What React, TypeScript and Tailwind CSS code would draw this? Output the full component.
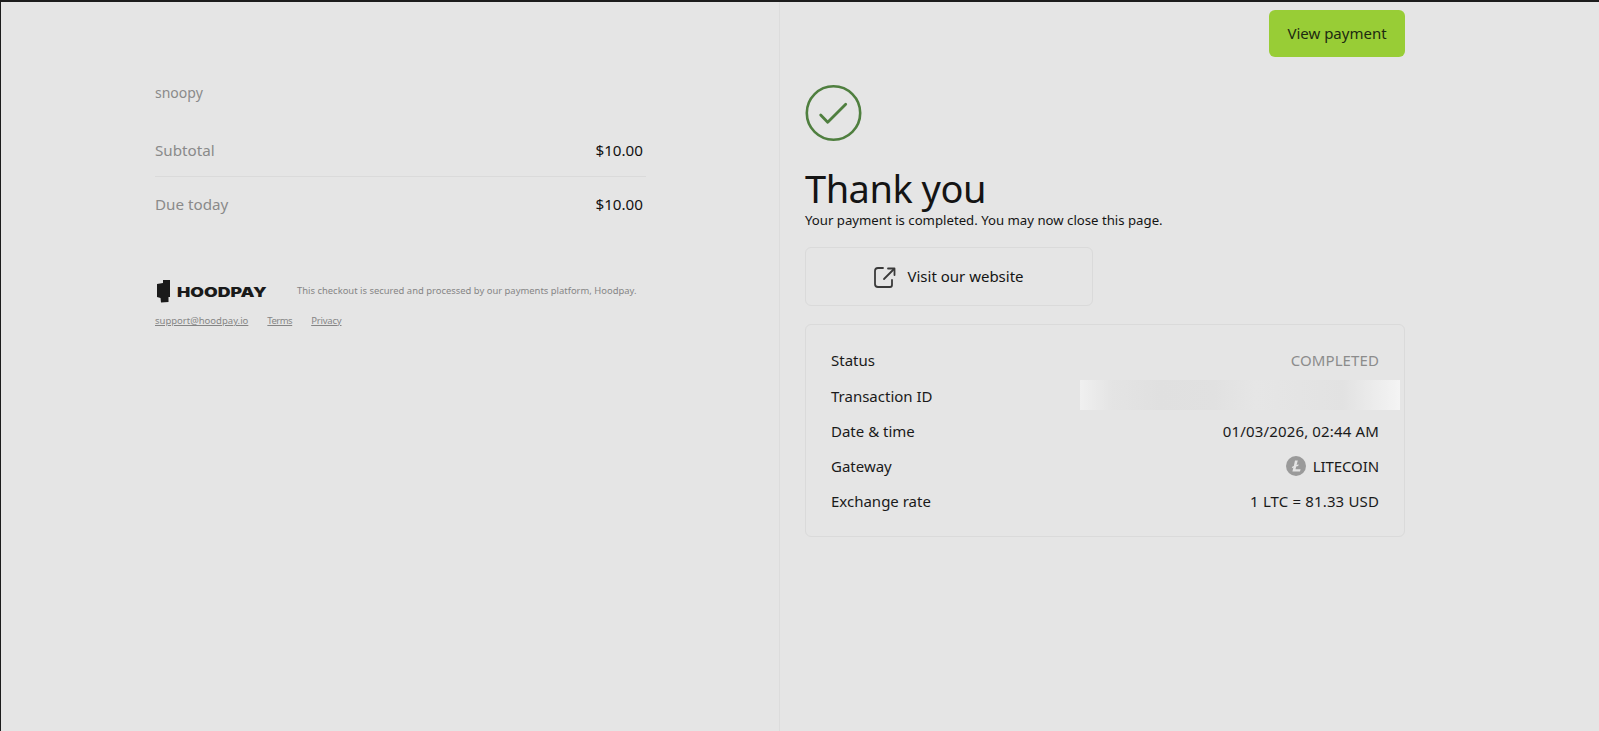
const FONT = "font-['Noto_Sans','Open_Sans',sans-serif]";

function Row({ label, children }: { label: string; children: React.ReactNode }) {
  return (
    <div className="flex h-[35.2px] items-center justify-between text-[15px] text-[#1a1a1a]">
      <span>{label}</span>
      {children}
    </div>
  );
}

function LogoMark() {
  return (
    <svg width="16" height="24" viewBox="0 0 16 24" className="shrink-0">
      <path d="M2 5 L8 4 L8 1 L15 1 L15 18 L13.5 18 L13.5 23 L6 23.5 L5.5 19 L2 18 Z" fill="#1a1a1a" />
    </svg>
  );
}

function LitecoinIcon() {
  return (
    <svg width="20" height="20" viewBox="0 0 20 20" className="shrink-0">
      <circle cx="10" cy="10" r="10" fill="#9a9a9a" />
      <path d="M9 4.5 H11.8 L10.6 9 L12.6 8.3 L12.2 9.9 L10.2 10.6 L9.5 13.3 H14.6 L14 15.5 H6.4 L7.4 11.6 L5.8 12.2 L6.2 10.7 L7.8 10.1 Z" fill="#e4e4e4" />
    </svg>
  );
}

export default function App() {
  return (
    <div className={`${FONT} flex h-[731px] w-[1599px] overflow-hidden border-t-2 border-l border-[#1c1c1c] bg-[#e5e5e5]`}>
      <div className="h-full w-[779px] shrink-0 border-r border-[#dcdcdc] pt-[81px] pl-[154px]">
        <div className="w-[491px]">
          <div className="h-[20px] text-[14px] leading-[20px] text-[#8a8a8a]">snoopy</div>
          <div className="mt-[21px] flex h-[53px] items-center justify-between border-b border-[#dadada] pr-[3px] text-[15.2px]">
            <span className="text-[#8a8a8a]">Subtotal</span>
            <span className="text-[#111111]">$10.00</span>
          </div>
          <div className="flex h-[55px] items-center justify-between pr-[3px] text-[15.2px]">
            <span className="text-[#8a8a8a]">Due today</span>
            <span className="text-[#111111]">$10.00</span>
          </div>
          <div className="mt-[47px] flex items-center">
            <LogoMark />
            <span className="ml-[6px] w-[90px] shrink-0">
              <span className="inline-block origin-left scale-x-[1.36] font-['Inter',sans-serif] text-[13px] leading-none font-black text-[#1a1a1a]">HOODPAY</span>
            </span>
            <span className="ml-[30px] text-[9.43px] whitespace-nowrap text-[#858585]">This checkout is secured and processed by our payments platform, Hoodpay.</span>
          </div>
          <div className="mt-[11px] flex gap-[19px] text-[9.5px] text-[#858585] underline">
            <span>support@hoodpay.io</span>
            <span className="tracking-[-0.5px]">Terms</span>
            <span className="tracking-[-0.2px]">Privacy</span>
          </div>
        </div>
      </div>

      <div className="h-full flex-1 pt-[8px] pl-[25px]">
        <div className="w-[600px]">
          <div className="flex justify-end">
            <div className="flex h-[47px] w-[136px] items-center justify-center rounded-[6px] bg-[#98cd36] text-[15px] text-[#1d2a10]">View payment</div>
          </div>
          <svg width="57" height="56" viewBox="0 0 57 56" className="mt-[28px] block">
            <circle cx="28.5" cy="28" r="26.7" fill="none" stroke="#4f7f3f" strokeWidth="2.6" />
            <path d="M15.7 30 L22.7 37.3 L40.7 19.3" fill="none" stroke="#4f7f3f" strokeWidth="2.8" strokeLinecap="round" strokeLinejoin="round" />
          </svg>
          <div className="mt-[25px] h-[44px] text-[38px] leading-[44px] tracking-[-0.5px] text-[#141414]">Thank you</div>
          <div className="h-[20px] text-[13.2px] leading-[20px] text-[#141414]">Your payment is completed. You may now close this page.</div>
          <div className="mt-[17px] flex h-[59px] w-[288px] items-center justify-center gap-[11px] rounded-[6px] border border-[#dadada] text-[15px] text-[#141414]">
            <svg width="22" height="22" viewBox="0 0 22 22" fill="none" stroke="#3a3a3a" strokeWidth="1.8" strokeLinecap="round" strokeLinejoin="round">
              <path d="M9 2 H4 a3 3 0 0 0 -3 3 V18 a3 3 0 0 0 3 3 H16 a2 2 0 0 0 2 -2 V14" />
              <path d="M14 2.5 H20.5 V9" />
              <path d="M20 3 L10 13" />
            </svg>
            <span>Visit our website</span>
          </div>
          <div className="relative mt-[18px] h-[213px] rounded-[6px] border border-[#dadada] px-[25px] py-[18px]">
            <Row label="Status"><span className="tracking-[0.1px] text-[#8c8c8c]">COMPLETED</span></Row>
            <Row label="Transaction ID"><span /></Row>
            <Row label="Date &amp; time"><span className="tracking-[0.15px]">01/03/2026, 02:44 AM</span></Row>
            <Row label="Gateway">
              <span className="flex items-center gap-[7px] tracking-[-0.1px]"><LitecoinIcon />LITECOIN</span>
            </Row>
            <Row label="Exchange rate"><span className="tracking-[0.15px]">1 LTC = 81.33 USD</span></Row>
            <div className="absolute top-[55px] right-[4px] h-[30px] w-[320px] bg-[linear-gradient(90deg,#f0f0f0_0%,#e4e4e4_10%,#e0e0e0_25%,#e1e1e1_42%,#e6e6e6_55%,#e2e2e2_82%,#f4f4f4_100%)]" />
          </div>
        </div>
      </div>
    </div>
  );
}
